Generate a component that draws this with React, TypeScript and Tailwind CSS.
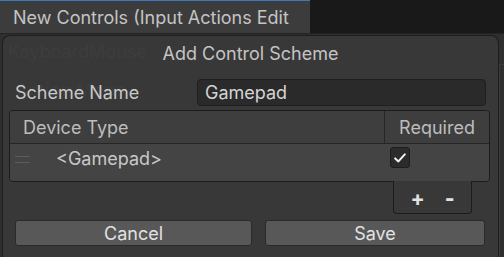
import React from "react";

const font = { fontFamily: "Inter, 'Noto Sans', sans-serif" };

const CheckIcon = () => (
  <svg width="12" height="10" viewBox="0 0 12 10" fill="none">
    <path d="M1.2 5.4 L4.4 8.4 L10.8 1.4" stroke="#f0f0f0" strokeWidth="2" strokeLinecap="round" strokeLinejoin="round" />
  </svg>
);

const App = () => {
  return (
    <div className="w-[504px] h-[257px] bg-[#2f2f2f] overflow-hidden flex flex-col text-[#c8c8c8] leading-none" style={font}>
      {/* tab bar */}
      <div className="h-[34px] flex border-b border-[#232323] shrink-0">
        <div className="w-[310px] bg-[#3c3c3c] border-t border-[#3a79bb] flex items-center pl-[13px] pt-[1px] text-[18px] text-[#c4c4c4] whitespace-nowrap overflow-hidden">
          New Controls (Input Actions Edit
        </div>
        <div className="flex-1 bg-[#191919]" />
      </div>

      <div className="flex flex-1 min-h-0">
        {/* dialog */}
        <div className="relative ml-[2px] mt-[1px] w-[497px] shrink-0 rounded-t-[8px] border border-b-0 border-[#1e1e1e] bg-[#383838] flex flex-col">
          {/* content behind the dialog showing through */}
          <div className="absolute left-[5px] top-[7px] text-[18px] text-[#3d3d3d] pointer-events-none">KeyboardMouse</div>
          <div className="absolute left-[12px] top-[45px] text-[18px] font-bold text-[#3c3c3c] pointer-events-none">Action Maps</div>

          <div className="relative shrink-0 h-[33px] pt-[2px] flex items-center justify-center text-[18px] text-[#c4c4c4]">
            Add Control Scheme
          </div>

          <div className="relative shrink-0 mt-[10px] flex items-center h-[27px] pl-[12px]">
            <div className="w-[182px] pt-[1px] text-[18px] text-[#c8c8c8]">Scheme Name</div>
            <div className="w-[289px] h-[27px] rounded-[4px] border border-[#1f1f1f] bg-[#2a2a2a] flex items-center pl-[7px] pt-[1px] text-[18px] text-[#d4d4d4]">
              Gamepad
            </div>
          </div>

          {/* device table */}
          <div className="relative shrink-0 mt-[4px] ml-[6px] w-[481px] rounded-[4px] border border-[#1c1c1c] overflow-hidden">
            <div className="h-[33px] flex border-b border-[#262626] bg-[#3e3e3e]">
              <div className="flex-1 flex items-center pl-[13px] pt-[2px] text-[18px] text-[#bdbdbd]">Device Type</div>
              <div className="w-[105px] border-l border-[#262626] flex items-center justify-center pt-[2px] text-[18px] text-[#bdbdbd]">Required</div>
            </div>
            <div className="h-[37px] flex bg-[#444444]">
              <div className="flex-1 flex items-start pt-[4px] pl-[5px]">
                <div className="w-[15px] h-[22px] flex flex-col justify-center gap-[5px]">
                  <div className="h-[1px] bg-[#5c5c5c]" />
                  <div className="h-[1px] bg-[#5c5c5c]" />
                </div>
                <div className="ml-[26px] h-[22px] flex items-center text-[18px] text-[#c8c8c8]">&lt;Gamepad&gt;</div>
              </div>
              <div className="w-[105px] pt-[3px] pl-[6px]">
                <div className="w-[20px] h-[21px] rounded-[3px] border border-[#1d1d1d] bg-[#2b2b2b] flex items-center justify-center">
                  <CheckIcon />
                </div>
              </div>
            </div>
          </div>

          {/* add / remove */}
          <div className="relative shrink-0 flex justify-end pr-[26px]">
            <div className="w-[79px] h-[33px] -mt-[1px] border border-t-0 border-[#1c1c1c] rounded-b-[4px] bg-[#383838] flex items-center justify-center gap-[20px] pt-[2px] text-[21px] font-bold text-[#e2e2e2]">
              <span>+</span>
              <span className="font-extrabold">-</span>
            </div>
          </div>

          {/* buttons */}
          <div className="relative shrink-0 mt-[6px] flex pl-[12px] gap-[13px]">
            <button className="w-[237px] h-[26px] rounded-[3px] border border-[#2a2a2a] bg-[#585858] pt-[2px] text-[18px] text-[#e2e2e2] flex items-center justify-center">
              Cancel
            </button>
            <button className="w-[220px] h-[26px] rounded-[3px] border border-[#2a2a2a] bg-[#585858] pt-[2px] text-[18px] text-[#e2e2e2] flex items-center justify-center">
              Save
            </button>
          </div>
        </div>
        <div className="flex-1 border-l border-[#3c3c3c] mt-[30px] border-t" />
      </div>
    </div>
  );
};

export default App;
